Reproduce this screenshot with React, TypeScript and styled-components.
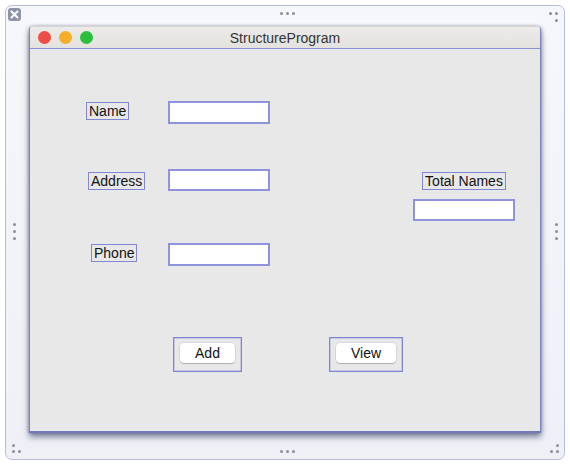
import styled, { createGlobalStyle } from "styled-components";

const GlobalStyle = createGlobalStyle`
    html, body {
        margin: 0;
        padding: 0;
        background: #ffffff;
        font-family: "Liberation Sans", Arial, sans-serif;
    }
`;

const Frame = styled.div`
    position: relative;
    box-sizing: border-box;
    margin: 5px;
    width: 560px;
    height: 455px;
    border: 1px solid #b9bce0;
    border-radius: 7px;
    background: linear-gradient(#f6f7fa, #eef0f6);
    padding: 20px 0 0 23px;
`;

const CloseBadge = styled.div`
    position: absolute;
    top: 2px;
    left: 2px;
    width: 13px;
    height: 13px;
    border-radius: 3px;
    background: #8e93a8;
    display: flex;
    align-items: center;
    justify-content: center;
`;

const Dot = styled.span<{ $x: number; $y: number }>`
    position: absolute;
    left: ${(p) => p.$x}px;
    top: ${(p) => p.$y}px;
    width: 3px;
    height: 3px;
    border-radius: 50%;
    background: #8c8e98;
`;

const Window = styled.div`
    box-sizing: border-box;
    width: 512px;
    height: 407px;
    display: flex;
    flex-direction: column;
    border: 1px solid #7c82b8;
    border-top-color: #d4d4d6;
    border-bottom: 2px solid #7278bc;
    border-radius: 4px 4px 0 0;
    box-shadow: 0 4px 6px rgba(30, 34, 80, 0.55), -1px 0 3px rgba(60, 60, 90, 0.2),
        1px 0 3px rgba(60, 60, 90, 0.2);
    overflow: hidden;
`;

const TitleBar = styled.div`
    position: relative;
    height: 21px;
    flex-shrink: 0;
    display: flex;
    align-items: center;
    gap: 8px;
    padding-left: 8px;
    background: linear-gradient(#ecebe9, #e3e2df);
`;

const Light = styled.span<{ $color: string }>`
    width: 13px;
    height: 13px;
    border-radius: 50%;
    background: ${(p) => p.$color};
`;

const Title = styled.div`
    position: absolute;
    left: 0;
    right: 0;
    top: 0;
    bottom: 0;
    display: flex;
    align-items: center;
    justify-content: center;
    font-size: 14px;
    color: #333333;
    pointer-events: none;
`;

const Content = styled.div`
    flex: 1;
    display: flex;
    flex-direction: column;
    background: #e8e8e8;
    border-top: 1px solid #8a90d6;
`;

const Row = styled.div<{ $top: number }>`
    display: flex;
    align-items: flex-start;
    margin-top: ${(p) => p.$top}px;
`;

const LabelCell = styled.div`
    width: 138px;
    flex-shrink: 0;
`;

const Label = styled.span<{ $indent?: number; $top?: number }>`
    display: inline-block;
    box-sizing: border-box;
    margin-left: ${(p) => p.$indent ?? 0}px;
    margin-top: ${(p) => p.$top ?? 0}px;
    height: 18px;
    line-height: 16px;
    padding: 0 2px;
    border: 1px solid #8187d6;
    font-size: 14px;
    color: #111111;
`;

const Field = styled.div<{ $h?: number }>`
    box-sizing: border-box;
    width: 102px;
    height: ${(p) => p.$h ?? 23}px;
    background: #ffffff;
    border: 2px solid #8e93dc;
    flex-shrink: 0;
`;

const TotalGroup = styled.div`
    margin-left: 143px;
    display: flex;
    flex-direction: column;
    align-items: center;
    gap: 9px;
`;

const ButtonFrame = styled.div<{ $indent: number }>`
    box-sizing: border-box;
    margin-left: ${(p) => p.$indent}px;
    height: 35px;
    padding: 5px 6px 0;
    border: 1px solid #7e84d4;
    box-shadow: inset 0 0 0 0.5px #a4a8e0;
`;

const Button = styled.div<{ $w: number }>`
    width: ${(p) => p.$w}px;
    height: 20px;
    background: #ffffff;
    border-radius: 4px;
    box-shadow: 0 1px 1px rgba(0, 0, 0, 0.2), 0 0 0 0.5px rgba(0, 0, 0, 0.12);
    display: flex;
    align-items: center;
    justify-content: center;
    font-size: 14px;
    color: #111111;
`;

const dots: [number, number][] = [
    [274, 6], [280, 6], [286, 6],
    [543, 6], [549, 6], [549, 13],
    [7, 217], [7, 224], [7, 231],
    [549, 217], [549, 224], [549, 231],
    [6, 438], [6, 444], [12, 444],
    [274, 444], [280, 444], [286, 444],
    [550, 438], [544, 444], [550, 444],
];

export default function App() {
    return (
        <>
            <GlobalStyle />
            <Frame>
                <CloseBadge>
                    <svg width="9" height="9" viewBox="0 0 9 9">
                        <path d="M1.5 1.5 L7.5 7.5 M7.5 1.5 L1.5 7.5" stroke="#fff" strokeWidth="2" strokeLinecap="round" />
                    </svg>
                </CloseBadge>
                {dots.map(([x, y], i) => (
                    <Dot key={i} $x={x} $y={y} />
                ))}
                <Window>
                    <TitleBar>
                        <Light $color="#ee4d46" />
                        <Light $color="#f4ae27" />
                        <Light $color="#2cbf3c" />
                        <Title>StructureProgram</Title>
                    </TitleBar>
                    <Content>
                        <Row $top={52}>
                            <LabelCell>
                                <Label $indent={56} $top={1}>Name</Label>
                            </LabelCell>
                            <Field />
                        </Row>
                        <Row $top={45}>
                            <LabelCell>
                                <Label $indent={58} $top={3}>Address</Label>
                            </LabelCell>
                            <Field $h={22} />
                            <TotalGroup>
                                <Label $top={3}>Total Names</Label>
                                <Field $h={22} />
                            </TotalGroup>
                        </Row>
                        <Row $top={22}>
                            <LabelCell>
                                <Label $indent={61} $top={1}>Phone</Label>
                            </LabelCell>
                            <Field />
                        </Row>
                        <Row $top={71}>
                            <ButtonFrame $indent={143}>
                                <Button $w={55}>Add</Button>
                            </ButtonFrame>
                            <ButtonFrame $indent={87}>
                                <Button $w={60}>View</Button>
                            </ButtonFrame>
                        </Row>
                    </Content>
                </Window>
            </Frame>
        </>
    );
}
